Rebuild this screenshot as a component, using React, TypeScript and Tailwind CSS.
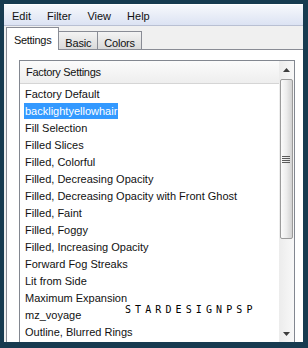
import React from 'react';

const menus = ['Edit', 'Filter', 'View', 'Help'];
const tabs = ['Settings', 'Basic', 'Colors'];

const presets = [
  'Factory Default',
  'backlightyellowhair',
  'Fill Selection',
  'Filled Slices',
  'Filled, Colorful',
  'Filled, Decreasing Opacity',
  'Filled, Decreasing Opacity with Front Ghost',
  'Filled, Faint',
  'Filled, Foggy',
  'Filled, Increasing Opacity',
  'Forward Fog Streaks',
  'Lit from Side',
  'Maximum Expansion',
  'mz_voyage',
  'Outline, Blurred Rings',
];

// small scrollbar arrow
const Arrow = ({ down }: { down?: boolean }) => (
  <svg width="7" height="4" viewBox="0 0 7 4" className={down ? 'rotate-180' : ''}>
    <path d="M0 4 L3.5 0 L7 4 Z" fill="#3d3d3d" />
  </svg>
);

export default function App() {
  const selected = 1;

  return (
    <div
      className="relative w-[308px] h-[348px] bg-[#173b50] pt-[4px] pl-[4px] pr-[5px] pb-[6px] text-[11px] text-[#111]"
      style={{ fontFamily: '"Liberation Sans", Arial, sans-serif' }}
    >
      <div className="w-full h-full bg-[#f0f0f0] overflow-hidden flex flex-col">
        {/* menu bar */}
        <div className="h-[22px] pt-[2px] pl-[8px] flex items-center gap-[16px] border-t border-t-white border-b border-b-[#b9c0d3] bg-gradient-to-b from-[#f6f8fc] to-[#dce3f3] shrink-0">
          {menus.map((m) => (
            <span key={m} className="leading-none">{m}</span>
          ))}
        </div>

        {/* tab strip */}
        <div className="relative z-10 h-[24px] pl-[2px] flex items-end shrink-0">
          {tabs.map((t, i) =>
            i === 0 ? (
              <div
                key={t}
                className="h-[23px] px-[7px] pt-[4px] bg-white border border-b-0 border-[#898c95] tracking-[-0.3px]"
              >
                {t}
              </div>
            ) : (
              <div
                key={t}
                className="h-[18px] mb-px px-[6px] pt-[3px] -ml-px first:ml-0 border border-b-0 border-[#898c95] bg-gradient-to-b from-[#f3f3f3] to-[#dadada] tracking-[-0.2px]"
              >
                {t}
              </div>
            )
          )}
        </div>

        {/* tab panel */}
        <div className="-mt-px ml-[2px] flex-1 bg-white border-t border-l border-[#898c95] pl-[12px] pt-[10px]">
          <div className="w-[276px] h-[284px] border border-[#828790] flex">
            <div className="flex-1 min-w-0">
              <div className="h-[23px] pl-[6px] flex items-center border-b border-[#d5d5d5] bg-gradient-to-b from-[#fbfbfb] to-[#eeeeee] tracking-[-0.3px]">
                Factory Settings
              </div>
              <div className="pt-px pl-[4px]">
                {presets.map((p, i) => (
                  <div key={p} className="h-[17px] flex items-center">
                    <span
                      className={`px-[1px] leading-[16px] whitespace-nowrap ${
                        i === selected ? 'bg-[#3399ff] text-white' : ''
                      }`}
                    >
                      {p}
                    </span>
                  </div>
                ))}
              </div>
            </div>

            {/* scrollbar */}
            <div className="w-[15px] flex flex-col bg-gradient-to-r from-[#ececec] to-[#f8f8f8]">
              <div className="h-[18px] flex items-center justify-center">
                <Arrow />
              </div>
              <div className="h-[160px] mx-[1px] rounded-[2px] border border-[#9b9b9b] bg-gradient-to-r from-[#fbfbfb] via-[#ececec] to-[#d2d2d2] flex items-center justify-center">
                <div className="flex flex-col gap-[1px] -ml-[2px]">
                  <div className="w-[8px] h-[1px] bg-[#5a5a5a]" />
                  <div className="w-[8px] h-[1px] bg-[#5a5a5a]" />
                  <div className="w-[8px] h-[1px] bg-[#5a5a5a]" />
                  <div className="w-[8px] h-[1px] bg-[#5a5a5a]" />
                </div>
              </div>
              <div className="flex-1" />
              <div className="h-[18px] flex items-center justify-center">
                <Arrow down />
              </div>
            </div>
          </div>
        </div>
      </div>

      {/* watermark */}
      <div
        className="absolute left-[125px] top-[305px] text-[10px] leading-none tracking-[4.1px] text-black"
        style={{ fontFamily: '"DejaVu Sans Mono", monospace' }}
      >
        STARDESIGNPSP
      </div>
    </div>
  );
}
